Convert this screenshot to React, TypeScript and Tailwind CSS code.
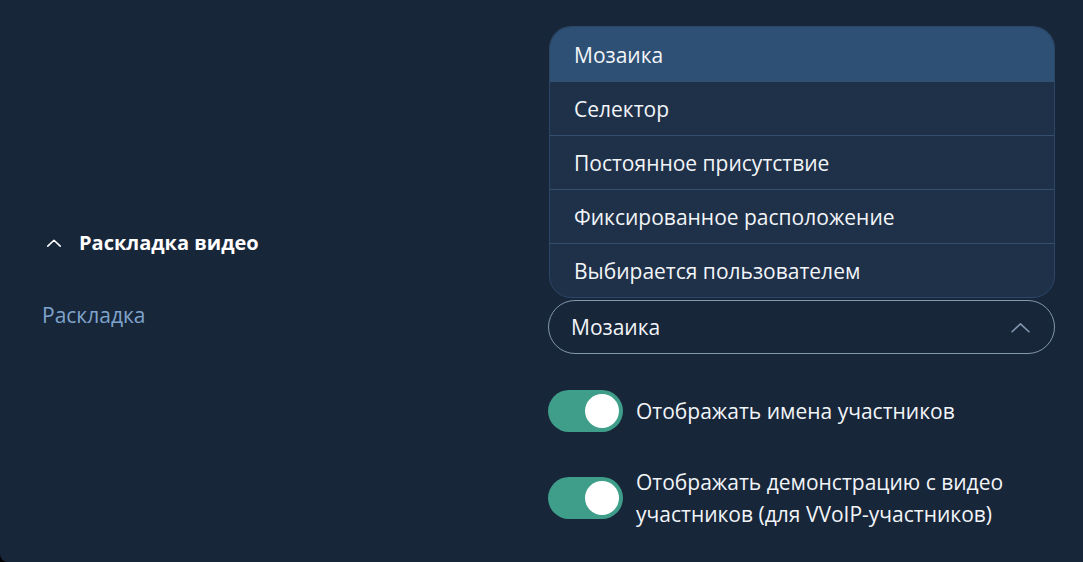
const options = [
  "Мозаика",
  "Селектор",
  "Постоянное присутствие",
  "Фиксированное расположение",
  "Выбирается пользователем",
];

function Toggle() {
  return (
    <div className="flex h-[42px] w-[75px] shrink-0 items-center justify-end rounded-full bg-[#3f9e89] pr-[4px]">
      <div className="h-[34px] w-[34px] rounded-full bg-white" />
    </div>
  );
}

function Chevron({ className, width }: { className: string; width: number }) {
  return (
    <svg
      className={className}
      viewBox="0 0 18 10"
      fill="none"
      stroke="currentColor"
      strokeWidth={width}
      strokeLinecap="round"
      strokeLinejoin="round"
    >
      <path d="M1 9 9 1.5 17 9" />
    </svg>
  );
}

export default function App() {
  return (
    <div className="h-[562px] w-full bg-black font-['Open_Sans',sans-serif]">
      <div className="h-full rounded-bl-[8px] bg-[#18263a] pl-[42px] pr-[28px] pt-[229px] text-[21px] text-[#f2f5f8]">
        <div className="flex h-7 items-center">
          <Chevron className="ml-[5px] h-[8px] w-[14px] text-white" width={2} />
          <span className="ml-[18px] text-[20px] font-bold text-white">Раскладка видео</span>
        </div>

        <div className="mt-[43px] grid grid-cols-[506px_1fr]">
          <div className="pt-[1px] leading-7 text-[#7fa4cd]">Раскладка</div>

          <div className="flex flex-col">
            <div className="relative">
              {/* open options menu */}
              <div className="absolute bottom-full left-[1px] right-0 mb-[2px] overflow-hidden rounded-[22px] border border-[#2b4666] bg-[#1f3049]">
                {options.map((opt, i) => (
                  <div
                    key={opt}
                    className={
                      i === 0
                        ? "flex h-[54px] items-center bg-[#2e5075] pl-[24px] pt-[3px]"
                        : "flex h-[54px] items-center border-t border-[#34506e] pl-[24px] pt-[2px]"
                    }
                  >
                    {opt}
                  </div>
                ))}
              </div>

              <div className="flex h-[54px] items-center justify-between rounded-full border border-[#8397ad] pl-[22px] pr-[24px]">
                <span className="pt-[1px]">Мозаика</span>
                <Chevron className="h-[11px] w-[19px] text-[#8298b0]" width={1.5} />
              </div>
            </div>

            <div className="mt-[36px] flex flex-col gap-[34px]">
              <div className="flex items-center gap-[13px]">
                <Toggle />
                <span className="leading-8">Отображать имена участников</span>
              </div>
              <div className="flex items-center gap-[13px]">
                <Toggle />
                <span className="leading-8">
                  Отображать демонстрацию с видео
                  <br />
                  участников (для VVoIP-участников)
                </span>
              </div>
            </div>
          </div>
        </div>
      </div>
    </div>
  );
}
